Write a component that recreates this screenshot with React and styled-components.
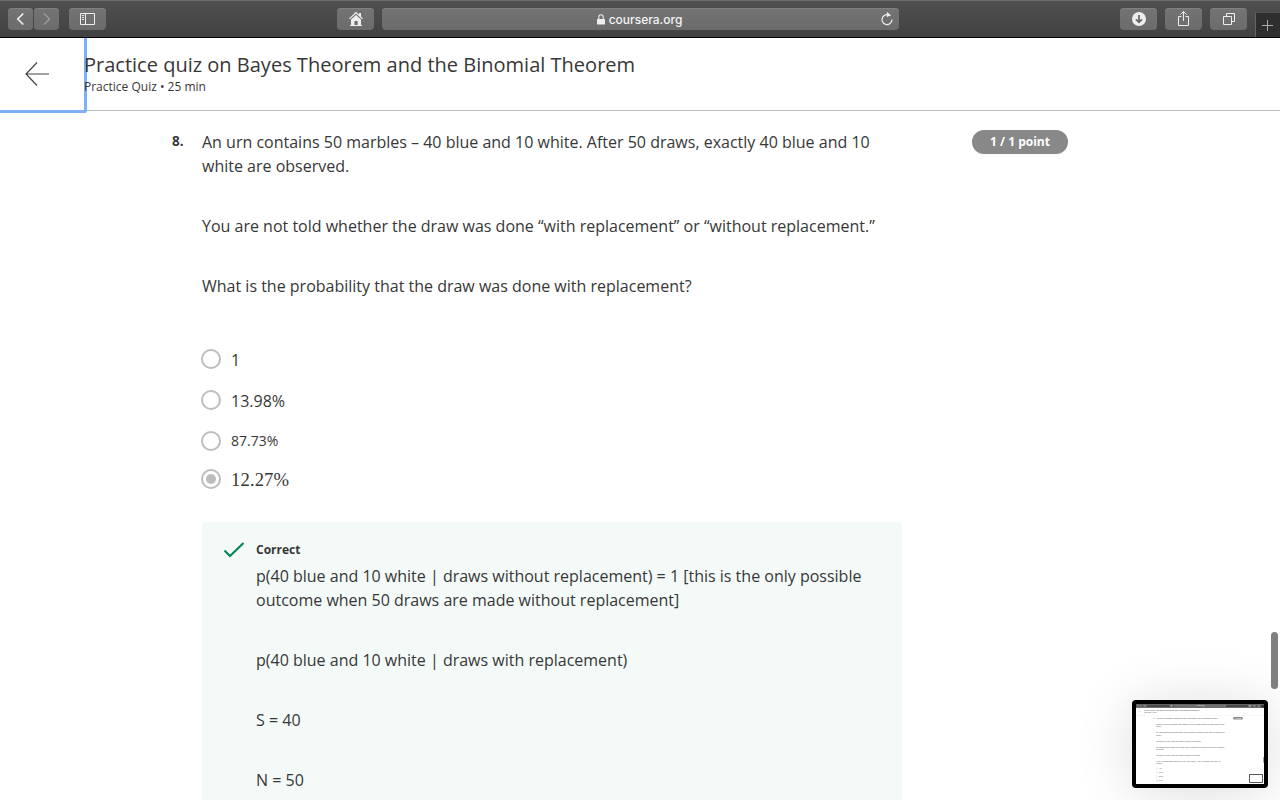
import React from 'react';
import styled, { createGlobalStyle } from 'styled-components';

const Global = createGlobalStyle`
  * { box-sizing: border-box; }
  body { margin: 0; background: #fff; overflow: hidden; font-family: "Open Sans", sans-serif; color: #373737; }
  p, h1 { margin: 0; font-weight: 400; }
`;

const Screen = styled.div`
  position: relative;
  width: 1280px;
  height: 800px;
  overflow: hidden;
  background: #fff;
  display: flex;
  flex-direction: column;
`;

const Toolbar = styled.div`
  flex: none;
  height: 38px;
  display: flex;
  align-items: flex-start;
  padding: 7px 0 0 8px;
  background: linear-gradient(#505050, #414141);
  border-top: 1px solid #6b6b6b;
  border-bottom: 1px solid #000;
`;

const ToolButton = styled.div`
  flex: none;
  width: ${(p) => p.$w || 37}px;
  height: 22px;
  margin-left: ${(p) => p.$gap || 0}px;
  border-radius: 4px;
  background: linear-gradient(#747474, #6b6b6b);
  box-shadow: inset 0 1px 0 #808080;
  display: flex;
  align-items: center;
  justify-content: center;
  svg { display: block; }
`;

const AddressBar = styled(ToolButton)`
  position: relative;
  color: #f4f4f4;
  font: 500 12px/22px Inter, sans-serif;
  gap: 4px;
  padding: 2px 2px 0 0;
`;

const Lock = styled.svg`
  margin-top: -2px;
`;

const Reload = styled.svg`
  position: absolute;
  right: 5px;
  top: 3px;
`;

const NewTab = styled.div`
  flex: none;
  width: 25px;
  height: 25px;
  margin: 4px 0 0 8px;
  background: #2e2e2e;
  border-left: 1px solid #646464;
  border-top: 1px solid #505050;
  svg { display: block; }
`;

const Header = styled.header`
  flex: none;
  height: 73px;
  display: flex;
  border-bottom: 1px solid #bdbdbd;
`;

const Back = styled.div`
  flex: none;
  width: 87px;
  height: 75px;
  border: 3px solid #7eb0f5;
  border-left: 0;
  border-top: 0;
  border-radius: 0 0 3px 0;
  svg { display: block; margin: 23px 0 0 24px; }
`;

const Titles = styled.div`
  position: relative;
  margin-left: -3px;
  padding-top: 12px;
`;

const Title = styled.h1`
  font-size: 20.02px;
  line-height: 30px;
`;

const Subtitle = styled.p`
  font-size: 12px;
  line-height: 14px;
`;

const Quiz = styled.main`
  display: flex;
  padding: 19px 212px 0 172px;
`;

const Number = styled.div`
  width: 30px;
  font-size: 13.5px;
  font-weight: 700;
  line-height: 22px;
`;

const Question = styled.section`
  width: 700px;
`;

const Text = styled.p`
  font-size: 16px;
  line-height: 24px;
  margin-bottom: 36px;
  white-space: nowrap;
`;

const Points = styled.div`
  margin-left: auto;
  width: 96px;
  height: 24px;
  border-radius: 12px;
  background: #888;
  color: #fff;
  font-size: 12px;
  font-weight: 700;
  line-height: 24px;
  text-align: center;
`;

const Options = styled.div`
  padding-top: 4px;
  margin: ${(p) => (p.$tight ? -26 : 12)}px 0 0 -1px;
`;

const Option = styled.div`
  display: flex;
  align-items: center;
  height: ${(p) => p.$h}px;
  gap: 10px;
`;

const Radio = styled.span`
  width: 20px;
  height: 20px;
  border: 2px solid #bdbdbd;
  border-radius: 50%;
  display: flex;
  align-items: center;
  justify-content: center;
  &::after {
    content: "";
    width: 10px;
    height: 10px;
    border-radius: 50%;
    background: ${(p) => (p.$on ? '#bdbdbd' : 'transparent')};
  }
`;

const Label = styled.span`
  font-size: ${(p) => p.$size || 16}px;
  line-height: 24px;
  padding-top: ${(p) => p.$drop || 0}px;
  ${(p) => p.$math && 'font-family: "Liberation Serif", serif; letter-spacing: 0.1px;'}
`;

const Feedback = styled.div`
  margin-top: 25px;
  height: 300px;
  padding: 18px 0 0 22px;
  background: #f4faf8;
  display: flex;
  svg { flex: none; display: block; }
`;

const FeedbackBody = styled.div`
  padding-left: 12px;
`;

const Verdict = styled.p`
  font-size: 12px;
  font-weight: 700;
  line-height: 20px;
  margin-bottom: 4px;
`;

const Scrollbar = styled.div`
  position: absolute;
  left: 1271px;
  top: ${(p) => p.$top}px;
  width: 7px;
  height: 57px;
  border-radius: 4px;
  background: #808080;
`;

const Thumb = styled.div`
  position: absolute;
  left: 1132px;
  top: 700px;
  width: 136px;
  height: 88px;
  padding: 4px;
  border-radius: 4px;
  background: #000;
  box-shadow: 0 4px 56px rgba(0, 0, 0, 0.14);
`;

const ThumbView = styled.div`
  width: 128px;
  height: 80px;
  overflow: hidden;
  background: #fff;
`;

const Mini = styled.div`
  width: 1280px;
  height: 800px;
  transform: scale(0.1);
  transform-origin: 0 0;
`;

const NestedThumb = styled.div`
  position: absolute;
  right: 12px;
  bottom: 12px;
  width: 136px;
  height: 88px;
  border: 8px solid #333;
  background: #fff;
`;

function BrowserBar() {
  return (
    <Toolbar>
      <ToolButton $w={25}>
        <svg width="25" height="22" fill="none" stroke="#eee" strokeWidth="1.7"><path d="M15.300 5.500 9.800 11l5.500 5.500" /></svg>
      </ToolButton>
      <ToolButton $w={25} $gap={1}>
        <svg width="25" height="22" fill="none" stroke="#9a9a9a" strokeWidth="1.5"><path d="M10 5.500 15.500 11 10 16.500" /></svg>
      </ToolButton>
      <ToolButton $gap={10}>
        <svg width="37" height="22" fill="none" stroke="#eee"><path d="M11.500 5.500h14v11h-14zM16.500 5.500v11M13 7.500h2M13 9.500h2M13 11.500h2" /></svg>
      </ToolButton>
      <ToolButton $gap={231}>
        <svg width="37" height="22" fill="#eee">
          <path d="M19 3.700 12 10.500l.8.800L19 5.600l6.200 5.700.8-.8-2-2V5h-2v1.700z" />
          <path d="M14 11.500 19 7l5 4.500V18h-3.300v-5h-3.200v5H14zM13 17h12v1H13z" />
        </svg>
      </ToolButton>
      <AddressBar $w={517} $gap={8}>
        <Lock width="8" height="11" fill="#eee"><rect y="5" width="8" height="5.500" rx=".6" /><path d="M1.800 5V3a2.200 2.200 0 0 1 4.400 0v2" fill="none" stroke="#eee" strokeWidth="1.100" /></Lock>
        <span>coursera.org</span>
        <Reload width="14" height="16" fill="none" stroke="#eee" strokeWidth="1.200">
          <path d="M10.500 5A5 5 0 1 0 12 8.600M7 3.600h1.500" /><path d="M6.800.8v5.400L10.500 4z" fill="#eee" stroke="none" />
        </Reload>
      </AddressBar>
      <ToolButton $gap={221}>
        <svg width="37" height="22"><circle cx="19" cy="11" r="7" fill="#eee" /><path d="M19 7v7M16 11.300l3 3 3-3" fill="none" stroke="#686868" strokeWidth="1.800" /></svg>
      </ToolButton>
      <ToolButton $gap={8}>
        <svg width="37" height="22" fill="none" stroke="#eee"><path d="M16.500 8.500h-3v9h10v-9h-3M18.500 13V3.500M15.500 6.500l3-3 3 3" /></svg>
      </ToolButton>
      <ToolButton $gap={8}>
        <svg width="37" height="22" fill="none" stroke="#eee"><path d="M13.500 8.500h8v8h-8zM16.500 8V5.500h8v8H22" /></svg>
      </ToolButton>
      <NewTab>
        <svg width="24" height="24" stroke="#aaa"><path d="M6 12.500h11M11.500 7v11" /></svg>
      </NewTab>
    </Toolbar>
  );
}

function PageHeader() {
  return (
    <Header>
      <Back>
        <svg width="26" height="26" fill="none" stroke="#444" strokeWidth="1.200"><path d="M25 13H2M13 1.500 2 13l11 11.500" /></svg>
      </Back>
      <Titles>
        <Title>Practice quiz on Bayes Theorem and the Binomial Theorem</Title>
        <Subtitle>Practice Quiz • 25 min</Subtitle>
      </Titles>
    </Header>
  );
}

function PreviousQuestion() {
  return (
    <Mini>
      <Screen>
        <BrowserBar />
        <PageHeader />
        <Quiz>
          <Number>6.</Number>
          <Question>
            <Text>We have the following information about a new medical test for diagnosing cancer.</Text>
            <Text>Before any data are observed, we know that 5% of the population to be tested actually have<br />cancer.</Text>
            <Text>Of those tested who do have cancer, 90% of them get an accurate test result of “Positive” for<br />cancer.</Text>
            <Text>The other 10% get a false test result of “Negative” for cancer.</Text>
            <Text>Of the people who do not have cancer, 90% of them get an accurate test result of “Negative”<br />for cancer.</Text>
            <Text>The other 10% get a false test result of “Positive” for cancer.</Text>
            <Text>What is the conditional probability that I have cancer, if I get a “Negative” test result for<br />Cancer?</Text>
            <Options $tight>
              {['.9%', '99.1%', '88.2%', '0.6%'].map((v, i) => (
                <Option key={v} $h={41}><Radio $on={i === 3} /><Label>{v}</Label></Option>
              ))}
            </Options>
          </Question>
          <Points>1 / 1 point</Points>
        </Quiz>
        <Scrollbar $top={530} />
        <NestedThumb />
      </Screen>
    </Mini>
  );
}

export default function App() {
  return (
    <>
      <Global />
      <Screen>
        <BrowserBar />
        <PageHeader />
        <Quiz>
          <Number>8.</Number>
          <Question>
            <Text>An urn contains 50 marbles – 40 blue and 10 white. After 50 draws, exactly 40 blue and 10<br />white are observed.</Text>
            <Text>You are not told whether the draw was done “with replacement” or “without replacement.”</Text>
            <Text>What is the probability that the draw was done with replacement?</Text>
            <Options>
              <Option $h={41}><Radio /><Label $drop={2}>1</Label></Option>
              <Option $h={41}><Radio /><Label $drop={2}>13.98%</Label></Option>
              <Option $h={41}><Radio /><Label $size={14}>87.73%</Label></Option>
              <Option $h={36}><Radio $on /><Label $size={18.7} $drop={2} $math>12.27%</Label></Option>
            </Options>
            <Feedback>
              <svg width="20" height="20" fill="none" stroke="#00855a" strokeWidth="2"><path d="M.5 10.500 6 16 19.500 3" /></svg>
              <FeedbackBody>
                <Verdict>Correct</Verdict>
                <Text>p(40 blue and 10 white | draws without replacement) = 1 [this is the only possible<br />outcome when 50 draws are made without replacement]</Text>
                <Text>p(40 blue and 10 white | draws with replacement)</Text>
                <Text>S = 40</Text>
                <Text>N = 50</Text>
              </FeedbackBody>
            </Feedback>
          </Question>
          <Points>1 / 1 point</Points>
        </Quiz>
        <Scrollbar $top={632} />
        <Thumb><ThumbView><PreviousQuestion /></ThumbView></Thumb>
      </Screen>
    </>
  );
}
